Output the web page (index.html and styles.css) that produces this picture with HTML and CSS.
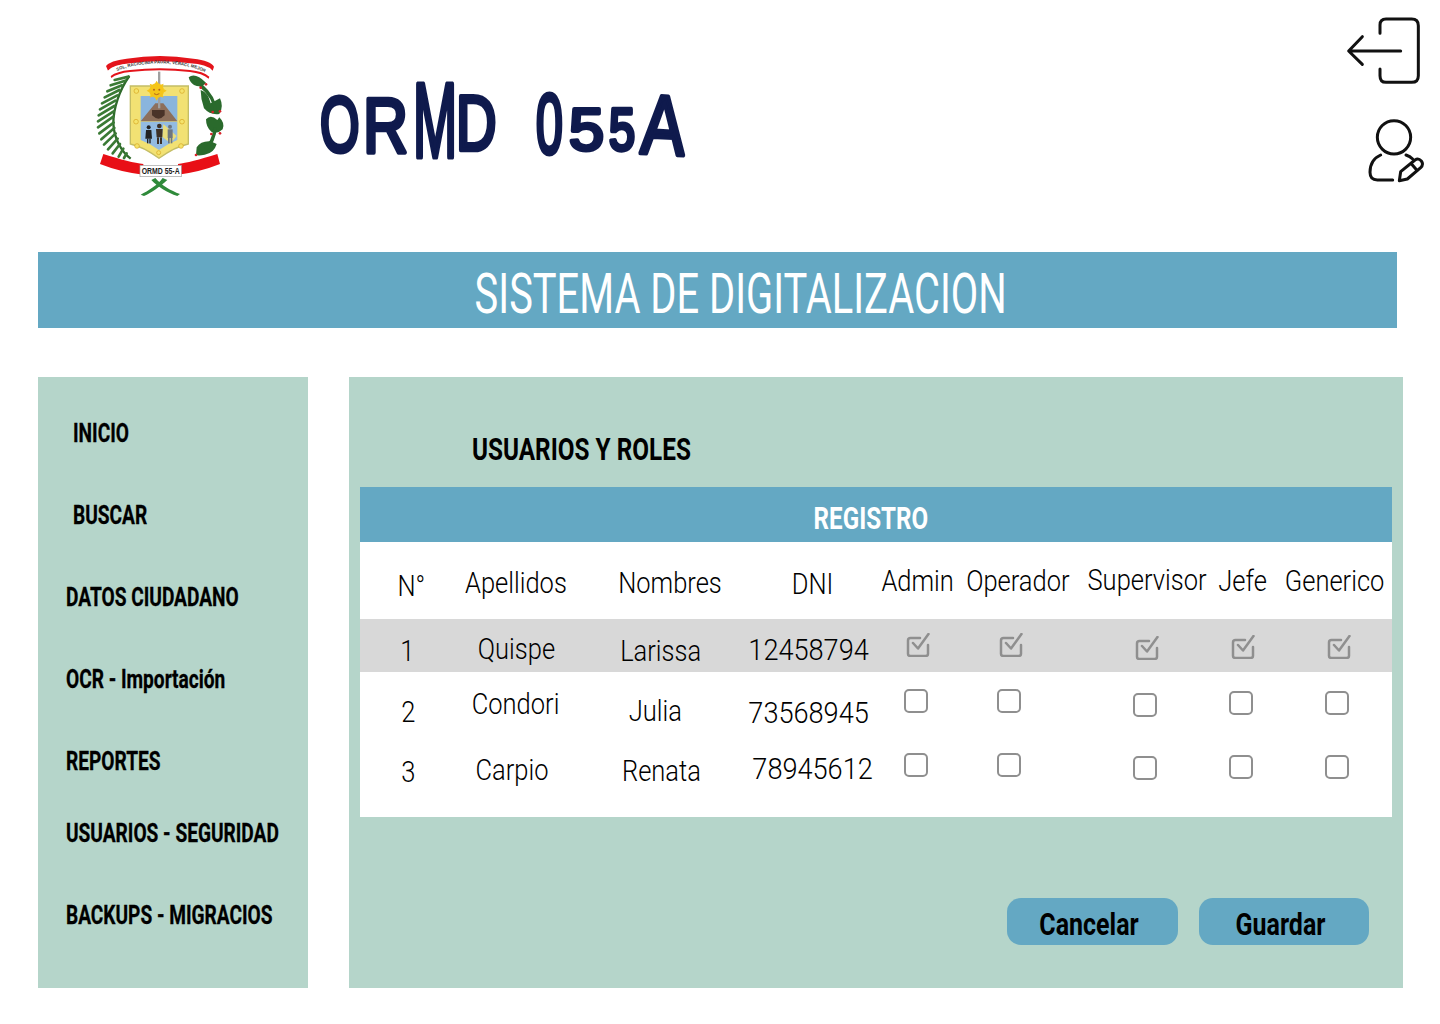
FILE: index.html
```html
<!DOCTYPE html>
<html lang="es">
<head>
<meta charset="utf-8">
<title>ORMD 055A</title>
<link rel="stylesheet" href="styles.css">
</head>
<body>
<header class="top">
  <svg class="logo" viewBox="0 0 480 510" aria-label="Escudo ORMD 55-A">
    <path d="M78 78 Q90 62 140 56 Q240 40 340 56 Q392 62 402 80 L398 92 Q380 72 330 70 Q240 58 150 70 Q100 74 84 92Z" fill="#e4141b"/>
    <path d="M84 92 Q104 74 150 72 Q240 60 330 72 Q378 76 396 96 L388 110 Q370 94 330 90 Q240 80 150 90 Q110 94 92 108Z" fill="#fff"/>
    <path d="M92 108 Q110 94 150 90 Q240 80 330 90 Q370 94 388 110 L386 116 Q366 100 330 96 Q240 86 150 96 Q112 100 94 114Z" fill="#e4141b"/>
    <path id="motto-line" d="M100 98 Q150 72 240 70 Q330 72 386 102" fill="none"/>
    <text class="motto"><textPath href="#motto-line" startOffset="50%" text-anchor="middle">SOL, RACIOCINIA PAURA, VERACI, MEJOR</textPath></text>

    <path class="palm-spine" d="M148 108 C118 150 100 205 100 250 C102 295 124 335 152 356"/>
    <g class="palm-leaves">
      <path d="M146 110 L104 120"/><path d="M136 122 L92 136"/><path d="M126 136 L82 154"/><path d="M118 150 L74 172"/>
      <path d="M112 166 L66 190"/><path d="M106 182 L60 208"/><path d="M103 198 L56 226"/><path d="M101 214 L54 244"/>
      <path d="M100 230 L54 262"/><path d="M101 248 L58 280"/><path d="M103 264 L64 298"/><path d="M107 280 L72 314"/>
      <path d="M113 296 L84 328"/><path d="M120 312 L98 340"/><path d="M130 326 L116 350"/><path d="M140 340 L132 354"/>
    </g>

    <g class="laurel">
      <path d="M326 112 Q345 96 378 128 Q365 145 342 135 Q330 128 326 112Z"/>
      <path d="M362 150 Q385 158 392 190 L420 175 Q432 200 418 222 Q390 226 372 205 Q362 178 362 150Z"/>
      <path d="M378 238 Q392 222 412 240 L418 232 Q436 250 428 268 Q412 284 394 275 Q378 262 378 238Z"/>
      <path d="M350 322 Q362 302 392 304 L410 312 Q402 340 374 344 Q356 348 348 345Z"/>
      <path d="M366 132 Q408 168 412 215 L404 218 Q398 172 358 140Z"/>
      <path d="M410 262 Q410 306 372 342 L364 336 Q398 304 400 262Z"/>
    </g>
    <g fill="#d8232a"><circle cx="378" cy="133" r="4"/><circle cx="362" cy="143" r="4"/><circle cx="398" cy="216" r="4"/><circle cx="420" cy="214" r="4"/><circle cx="394" cy="282" r="4"/><circle cx="420" cy="280" r="4"/><circle cx="348" cy="345" r="4"/></g>

    <path d="M151 138 H325 V312 Q285 320 237 355 Q190 320 151 312Z" fill="#f2e173" stroke="#c4bd66" stroke-width="4"/>
    <rect x="182" y="168" width="110" height="76" fill="#8ab5dd"/>
    <path d="M182 244 L226 190 H250 L292 244Z" fill="#8d6f5b"/>
    <path d="M182 246 H292 V300 Q265 310 237 330 Q210 310 182 300Z" fill="#93bbe2"/>
    <path d="M250 252 L290 288 L272 310 L246 290Z" fill="#e8dc7e"/>
    <rect x="234" y="95" width="7" height="110" fill="#a0a0a0"/>
    <path d="M216 210 H254 V226 Q236 246 216 226Z" fill="#4a3328"/>
    <g fill="#f5c518"><circle cx="230" cy="152" r="22"/><path d="M230 122 l6 10 h-12Z M230 182 l6 -10 h-12Z M200 152 l10 6 v-12Z M260 152 l-10 6 v-12Z M209 131 l11 4 -7 7Z M251 131 l-11 4 7 7Z M209 173 l11 -4 -7 -7Z M251 173 l-11 -4 7 -7Z"/></g>
    <circle cx="222" cy="149" r="3" fill="#b5651d"/><circle cx="238" cy="149" r="3" fill="#b5651d"/>
    <path d="M222 161 Q230 167 238 161" stroke="#b5651d" stroke-width="3" fill="none"/>
    <g fill="#222"><circle cx="206" cy="262" r="6"/><path d="M198 270 H214 L216 296 H196Z"/><rect x="201" y="296" width="4" height="14"/><rect x="208" y="296" width="4" height="14"/></g>
    <g fill="#3d3027"><circle cx="238" cy="258" r="7"/><path d="M228 267 H248 L247 292 H230Z"/><rect x="231" y="292" width="6" height="20"/><rect x="240" y="292" width="6" height="20"/></g>
    <g fill="#6d7580"><circle cx="270" cy="260" r="6"/><path d="M263 268 H278 V294 H263Z"/><rect x="264" y="294" width="5" height="16"/><rect x="272" y="294" width="5" height="16"/></g>
    <g fill="#f4e36b" stroke="#d6a520" stroke-width="2"><circle cx="169" cy="153" r="7"/><circle cx="306" cy="153" r="7"/><circle cx="168" cy="245" r="7"/><circle cx="306" cy="245" r="7"/><circle cx="171" cy="318" r="7"/><circle cx="303" cy="318" r="7"/><circle cx="236" cy="338" r="6"/></g>

    <path d="M70 342 Q150 368 190 372 V404 Q120 396 60 372Z M412 342 Q330 368 294 372 V404 Q360 396 420 372Z" fill="#e80f16"/>
    <rect x="180" y="376" width="124" height="34" fill="#fff" stroke="#a0a0a0" stroke-width="2"/>
    <text class="emblem-name" transform="translate(242 403) scale(.74 1)" text-anchor="middle">ORMD 55-A</text>
    <path d="M248 414 L262 420 C240 440 215 458 192 468 L182 464 C205 452 232 436 248 414Z M214 420 L226 414 C245 436 272 452 300 462 L292 468 C262 458 232 440 214 420Z" fill="#2f8a3a"/>
  </svg>

  <svg class="wordmark" viewBox="0 0 400 100" role="img" aria-label="ORMD 055A">
    <g class="wordmark-text">
      <text class="wm-o" transform="translate(11 82) rotate(-2) scale(.65 1)">O</text>
      <text class="wm-o" transform="translate(53 82) scale(.8 1)">R</text>
      <text class="wm-m" transform="translate(103 87) scale(.5 1)">M</text>
      <text class="wm-o" transform="translate(146 80) scale(.72 1)">D</text>
      <text class="wm-z" transform="translate(226 83) scale(.56 1)">0</text>
      <text class="wm-f" transform="translate(259 80) scale(1.050 1)">5</text>
      <text class="wm-f" transform="translate(299 80) scale(.78 1)">5</text>
      <text class="wm-a" transform="translate(330 83) rotate(3) scale(.78 1)">A</text>
    </g>
  </svg>

  <div class="top-actions">
    <svg class="action-icon" viewBox="0 0 330 285" aria-label="Salir"><path d="M150 85 V60 Q150 42 168 42 H245 Q265 42 265 62 V212 Q265 232 245 232 H168 Q150 232 150 212 V192 M212 138 H58 M97 95 L56 138 L97 178"/></svg>
    <svg class="action-icon" viewBox="0 285 330 285" aria-label="Editar perfil"><circle cx="192" cy="397" r="50"/><path d="M152 450 Q120 464 120 502 Q120 525 142 525 H188 M228 450 Q240 454 248 462"/><path d="M208 527 L212 500 L255 465 Q265 458 274 468 Q282 478 272 488 L232 522Z M244 476 L262 497"/></svg>
  </div>
</header>

<div class="banner"><span class="banner-title">SISTEMA DE DIGITALIZACION</span></div>

<div class="workspace">
  <nav class="sidebar">
    <a class="nav-item nav-inset"><span>INICIO</span></a>
    <a class="nav-item nav-inset"><span>BUSCAR</span></a>
    <a class="nav-item"><span>DATOS CIUDADANO</span></a>
    <a class="nav-item"><span>OCR - Importación</span></a>
    <a class="nav-item nav-short"><span>REPORTES</span></a>
    <a class="nav-item"><span>USUARIOS - SEGURIDAD</span></a>
    <a class="nav-item"><span>BACKUPS - MIGRACIOS</span></a>
  </nav>

  <main class="content">
    <h2 class="section-title"><span>USUARIOS Y ROLES</span></h2>
    <section class="register">
      <h3 class="register-head"><span>REGISTRO</span></h3>
      <div class="row row-head">
        <div class="cell"><span class="d5">N°</span></div>
        <div class="cell"><span class="d2">Apellidos</span></div>
        <div class="cell"><span class="d2">Nombres</span></div>
        <div class="cell"><span class="d3">DNI</span></div>
        <div class="cell"><span>Admin</span></div>
        <div class="cell"><span>Operador</span></div>
        <div class="cell"><span class="u1">Supervisor</span></div>
        <div class="cell"><span>Jefe</span></div>
        <div class="cell"><span>Generico</span></div>
      </div>
      <div class="row row-one">
        <div class="cell"><span class="d5">1</span></div>
        <div class="cell"><span class="d3">Quispe</span></div>
        <div class="cell"><span class="d5">Larissa</span></div>
        <div class="cell"><span class="d4 num">12458794</span></div>
        <div class="cell"><svg class="check u1" viewBox="0 0 24 24"><use href="#checked"/></svg></div>
        <div class="cell"><svg class="check u1" viewBox="0 0 24 24"><use href="#checked"/></svg></div>
        <div class="cell"><svg class="check d2" viewBox="0 0 24 24"><use href="#checked"/></svg></div>
        <div class="cell"><svg class="check d1" viewBox="0 0 24 24"><use href="#checked"/></svg></div>
        <div class="cell"><svg class="check d1" viewBox="0 0 24 24"><use href="#checked"/></svg></div>
      </div>
      <div class="row row-two">
        <div class="cell"><span class="d7">2</span></div>
        <div class="cell"><span class="u1">Condori</span></div>
        <div class="cell"><span class="d6">Julia</span></div>
        <div class="cell"><span class="d8 num">73568945</span></div>
        <div class="cell"><i class="box u3"></i></div>
        <div class="cell"><i class="box u3"></i></div>
        <div class="cell"><i class="box d1"></i></div>
        <div class="cell"><i class="box u1"></i></div>
        <div class="cell"><i class="box u1"></i></div>
      </div>
      <div class="row row-three">
        <div class="cell"><span class="d3">3</span></div>
        <div class="cell"><span class="d1">Carpio</span></div>
        <div class="cell"><span class="d2">Renata</span></div>
        <div class="cell"><span class="num">78945612</span></div>
        <div class="cell"><i class="box u3"></i></div>
        <div class="cell"><i class="box u3"></i></div>
        <div class="cell"><i class="box"></i></div>
        <div class="cell"><i class="box u1"></i></div>
        <div class="cell"><i class="box u1"></i></div>
      </div>
    </section>
    <div class="actions">
      <button class="btn" type="button"><span>Cancelar</span></button>
      <button class="btn" type="button"><span>Guardar</span></button>
    </div>
  </main>
</div>
<svg class="defs" aria-hidden="true"><symbol id="checked" viewBox="0 0 24 24"><path d="M14 5 H4.500 Q2 5 2 7.500 V21 Q2 23 4.500 23 H19.500 Q22 23 22 21 V12 M7 10 L12 15.500 L22.500 1"/></symbol></svg>
</body>
</html>
```
FILE: styles.css
```css
* { box-sizing: border-box; }
html, body { margin: 0; padding: 0; }
body {
  width: 1440px;
  height: 1024px;
  overflow: hidden;
  background: #fff;
  color: #000;
  font-family: Roboto, "Liberation Sans", sans-serif;
}
.defs { width: 0; height: 0; display: block; }

.top { display: flex; height: 252px; align-items: flex-start; }
.logo { width: 160px; height: 170px; margin: 40px 0 0 80px; flex: none; }
.motto { font: 700 13px "Liberation Sans", sans-serif; fill: #333; }
.palm-spine { fill: none; stroke: #2f6a2b; stroke-width: 7; }
.palm-leaves { fill: none; stroke: #3a7a35; stroke-width: 8; stroke-linecap: round; }
.laurel { fill: #2a6a2c; }
.emblem-name { font: 700 28px "Liberation Sans", sans-serif; fill: #1c1c1c; }

.wordmark { width: 400px; height: 100px; margin: 70px 0 0 70px; flex: none; display: block; overflow: visible; }
.wordmark-text {
  fill: #0f1a4d;
  stroke: #0f1a4d;
  stroke-width: 4;
  stroke-linejoin: round;
  stroke-linecap: round;
  font-family: "Liberation Sans", sans-serif;
}
.wordmark-text text { vector-effect: non-scaling-stroke; }
.wm-o { font-size: 78px; }
.wm-m { font-size: 106px; }
.wm-z { font-size: 86px; }
.wm-f { font-size: 60px; }
.wm-a { font-size: 84px; }

.top-actions { margin-left: auto; display: flex; flex-direction: column; padding-top: 5px; }
.action-icon {
  width: 110px;
  height: 95px;
  display: block;
  fill: none;
  stroke: #111;
  stroke-width: 9;
  stroke-linecap: round;
  stroke-linejoin: round;
}

.banner {
  margin-left: 38px;
  width: 1359px;
  height: 76px;
  background: #64a8c3;
  color: #fff;
  display: flex;
  align-items: center;
  justify-content: center;
  padding: 8px 0 0 46px;
  font-size: 56px;
  white-space: nowrap;
}
.banner-title { display: block; transform: scaleX(.712); }

.workspace { display: flex; gap: 41px; margin: 49px 0 0 38px; }
.sidebar {
  width: 270px;
  height: 611px;
  background: #b5d5ca;
  padding-top: 40px;
  display: flex;
  flex-direction: column;
}
.nav-item {
  height: 82px;
  padding-left: 28px;
  font-size: 26px;
  line-height: 32px;
  font-weight: 700;
  white-space: nowrap;
}
.nav-item span { display: inline-block; transform: scaleX(.735); transform-origin: 0 50%; -webkit-text-stroke: .3px #000; }
.nav-inset { padding-left: 35px; }
.nav-short { height: 72px; }

.content {
  width: 1054px;
  height: 611px;
  background: #b5d5ca;
  padding: 50px 11px 0;
  display: flex;
  flex-direction: column;
}
.section-title {
  margin: 0 0 0 112px;
  height: 60px;
  font-size: 32px;
  line-height: 44px;
  font-weight: 700;
  white-space: nowrap;
}
.section-title span { display: inline-block; transform: scaleX(.76); transform-origin: 0 50%; }
.register { background: #fff; padding-bottom: 17px; }
.register-head {
  margin: 0;
  height: 55px;
  background: #64a8c3;
  color: #fff;
  display: flex;
  align-items: center;
  justify-content: center;
  padding: 6px 10px 0 0;
  font-size: 32px;
  font-weight: 700;
}
.register-head span { display: block; transform: scaleX(.755); }
.row {
  display: grid;
  align-items: center;
  font-size: 30px;
  font-weight: 300;
  white-space: nowrap;
}
.cell { width: 0; display: flex; justify-content: center; }
.cell span { display: block; flex: none; transform: scaleX(.85); }
.cell .num { transform: scaleX(.905); }
.row-head { height: 77px; padding-left: 51px; grid-template-columns: 105px 154px 142px 106px 100px 129px 96px 92px 0; }
.row-one { height: 53px; padding-left: 47px; background: #d8d8d8; grid-template-columns: 109px 145px 148px 109px 93px 136px 96px 96px 0; }
.row-two { height: 64px; padding-left: 48px; grid-template-columns: 108px 139px 154px 107px 93px 136px 96px 96px 0; }
.row-three { height: 64px; padding-left: 48px; grid-template-columns: 104px 149px 152px 103px 93px 136px 96px 96px 0; }

.d1 { margin-top: 2px; } .d2 { margin-top: 4px; } .d3 { margin-top: 6px; }
.d4 { margin-top: 8px; } .d5 { margin-top: 10px; } .d6 { margin-top: 12px; }
.d7 { margin-top: 14px; } .d8 { margin-top: 16px; }
.u1 { margin-bottom: 2px; } .u3 { margin-bottom: 6px; }

.check { width: 24px; height: 24px; flex: none; fill: none; stroke: #8f8f8f; stroke-width: 2.500; stroke-linecap: round; stroke-linejoin: round; }
.box { display: block; flex: none; width: 24px; height: 24px; border: 2.500px solid #8f8f8f; border-radius: 5px; }

.actions { display: flex; gap: 21px; margin: 81px 0 0 647px; }
.btn {
  width: 171px;
  height: 47px;
  border: 0;
  border-radius: 14px;
  background: #64a8c3;
  color: #000;
  font-family: inherit;
  font-size: 32px;
  font-weight: 700;
  padding: 4px 7px 0 0;
}
.btn span { display: block; transform: scaleX(.78); }
.btn + .btn { width: 170px; }
```
